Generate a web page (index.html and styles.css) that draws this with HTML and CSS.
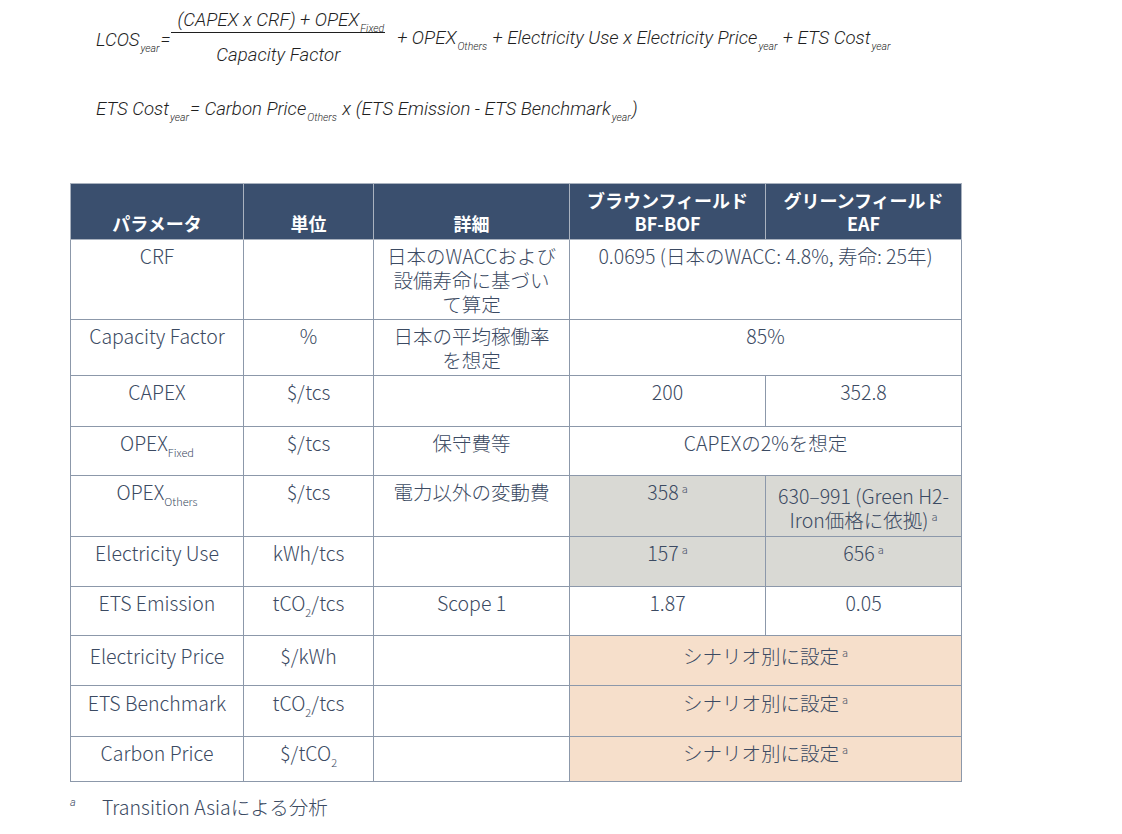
FILE: index.html
```html
<!DOCTYPE html>
<html lang="ja">
<head>
<meta charset="utf-8">
<title>LCOS parameters</title>
<link rel="stylesheet" href="styles.css">
</head>
<body>
<div class="page">
  <div class="formula f1">
    <div class="lhs">LCOS<sub>year</sub>=</div>
    <div class="frac">
      <div class="num">(CAPEX x CRF) + OPEX<sub>Fixed</sub></div>
      <div class="den">Capacity Factor</div>
    </div>
    <div class="rhs">+ OPEX<sub>Others</sub> + Electricity Use x Electricity Price<sub>year</sub> + ETS Cost<sub>year</sub></div>
  </div>
  <div class="formula f2">ETS Cost<sub>year</sub>= Carbon Price<sub>Others</sub> x (ETS Emission - ETS Benchmark<sub>year</sub>)</div>

  <table class="params">
    <colgroup>
      <col class="c1"><col class="c2"><col class="c3"><col class="c4"><col class="c5">
    </colgroup>
    <thead>
      <tr class="r-head">
        <th>パラメータ</th>
        <th>単位</th>
        <th>詳細</th>
        <th>ブラウンフィールド<br>BF-BOF</th>
        <th>グリーンフィールド<br>EAF</th>
      </tr>
    </thead>
    <tbody>
      <tr class="r-crf">
        <td>CRF</td>
        <td></td>
        <td class="detail">日本のWACCおよび設備寿命に基づいて算定</td>
        <td colspan="2">0.0695 (日本のWACC: 4.8%, 寿命: 25年)</td>
      </tr>
      <tr class="r-cf">
        <td>Capacity Factor</td>
        <td>%</td>
        <td class="detail">日本の平均稼働率を想定</td>
        <td colspan="2">85%</td>
      </tr>
      <tr class="r-capex">
        <td>CAPEX</td>
        <td>$/tcs</td>
        <td class="detail"></td>
        <td>200</td>
        <td>352.8</td>
      </tr>
      <tr class="r-opf">
        <td>OPEX<sub>Fixed</sub></td>
        <td>$/tcs</td>
        <td class="detail">保守費等</td>
        <td colspan="2">CAPEXの2%を想定</td>
      </tr>
      <tr class="r-opo">
        <td>OPEX<sub>Others</sub></td>
        <td>$/tcs</td>
        <td class="detail">電力以外の変動費</td>
        <td class="grey">358<sup>a</sup></td>
        <td class="grey wide">630–991 (Green H2-Iron価格に依拠)<sup>a</sup></td>
      </tr>
      <tr class="r-eu">
        <td>Electricity Use</td>
        <td>kWh/tcs</td>
        <td class="detail"></td>
        <td class="grey">157<sup>a</sup></td>
        <td class="grey">656<sup>a</sup></td>
      </tr>
      <tr class="r-etse">
        <td>ETS Emission</td>
        <td>tCO<sub>2</sub>/tcs</td>
        <td class="detail">Scope 1</td>
        <td>1.87</td>
        <td>0.05</td>
      </tr>
      <tr class="r-ep">
        <td>Electricity Price</td>
        <td>$/kWh</td>
        <td class="detail"></td>
        <td colspan="2" class="peach">シナリオ別に設定<sup>a</sup></td>
      </tr>
      <tr class="r-etsb">
        <td>ETS Benchmark</td>
        <td>tCO<sub>2</sub>/tcs</td>
        <td class="detail"></td>
        <td colspan="2" class="peach">シナリオ別に設定<sup>a</sup></td>
      </tr>
      <tr class="r-cp">
        <td>Carbon Price</td>
        <td>$/tCO<sub>2</sub></td>
        <td class="detail"></td>
        <td colspan="2" class="peach">シナリオ別に設定<sup>a</sup></td>
      </tr>
    </tbody>
  </table>

  <p class="note"><span class="note-mark">a</span>Transition Asiaによる分析</p>
</div>
</body>
</html>
```

FILE: styles.css
```css
html, body {
  margin: 0;
  padding: 0;
  background: #ffffff;
}

.page {
  padding-left: 70px;
}

/* ---------- formulas ---------- */
.formula {
  font-family: "Roboto", "Liberation Sans", sans-serif;
  font-style: italic;
  font-weight: 300;
  font-size: 18.6px;
  line-height: 24px;
  color: #1f1f1f;
  margin-left: 26px;
  white-space: nowrap;
}

.formula sub {
  font-size: 10.5px;
  vertical-align: -6px;
  line-height: 0;
  margin: 0 1px;
}

.f1 {
  display: flex;
  align-items: flex-start;
  height: 67px;
}

.lhs {
  margin-top: 28px;
}

.frac {
  margin-top: 8px;
  margin-left: 1px;
  display: flex;
  flex-direction: column;
  align-items: stretch;
}

.num {
  padding: 0 0 0 6px;
  border-bottom: 1px solid #1f1f1f;
  height: 24px;
}

.den {
  padding-top: 10px;
  text-align: center;
}

.rhs {
  margin-top: 26px;
  margin-left: 12px;
}

.f2 {
  margin-top: 30px;
}

/* ---------- table ---------- */
.params {
  margin-top: 62px;
  border-collapse: collapse;
  table-layout: fixed;
  width: 892px;
  font-family: "Noto Sans CJK JP", "Noto Sans", sans-serif;
  font-size: 19.5px;
  line-height: 24px;
  color: #3b4a62;
}

.c1 { width: 173px; }
.c2 { width: 130px; }
.c3 { width: 196px; }
.c4 { width: 196px; }
.c5 { width: 196px; }

.params th {
  background: #3a4f6e;
  color: #ffffff;
  font-weight: 700;
  font-size: 18px;
  vertical-align: bottom;
  line-height: 23px;
  padding: 0 4px 4px;
  border: 1px solid #a9b2bf;
}

.params td {
  border: 1px solid #8c98aa;
  text-align: center;
  vertical-align: top;
  padding: 4px 8px 0;
  font-weight: 300;
}

.params td.detail {
  padding-left: 12px;
  padding-right: 12px;
}

.params sub {
  font-size: 11px;
  vertical-align: -6px;
  line-height: 0;
}

.params sup {
  font-size: 11px;
  vertical-align: 7px;
  line-height: 0;
  margin-left: 3px;
}

.grey {
  background: #d9d9d4;
}

.peach {
  background: #f6dfcb;
}

.params td.wide {
  padding-left: 6px;
  padding-right: 6px;
}

.r-head { height: 56px; }
.r-crf { height: 80px; }
.r-cf { height: 56px; }
.r-capex { height: 51px; }
.r-opf { height: 49px; }
.r-opo { height: 61px; }
.r-eu { height: 50px; }
.r-etse { height: 49px; }
.r-ep { height: 50px; }
.r-etsb { height: 51px; }
.r-cp { height: 45px; }

.r-ep td { padding-top: 8px; }
.r-etsb td { padding-top: 5px; }
.r-opo td.wide { padding-top: 8px; }

/* ---------- footnote ---------- */
.note {
  margin: 13px 0 0;
  font-family: "Noto Sans CJK JP", "Noto Sans", sans-serif;
  font-size: 19.5px;
  font-weight: 300;
  line-height: 24px;
  color: #3b4a62;
  display: flex;
  align-items: flex-start;
}

.note-mark {
  display: inline-block;
  width: 32px;
  font-family: "Roboto", sans-serif;
  font-style: italic;
  font-size: 11px;
  line-height: 16px;
  color: #3b4a62;
}
```
